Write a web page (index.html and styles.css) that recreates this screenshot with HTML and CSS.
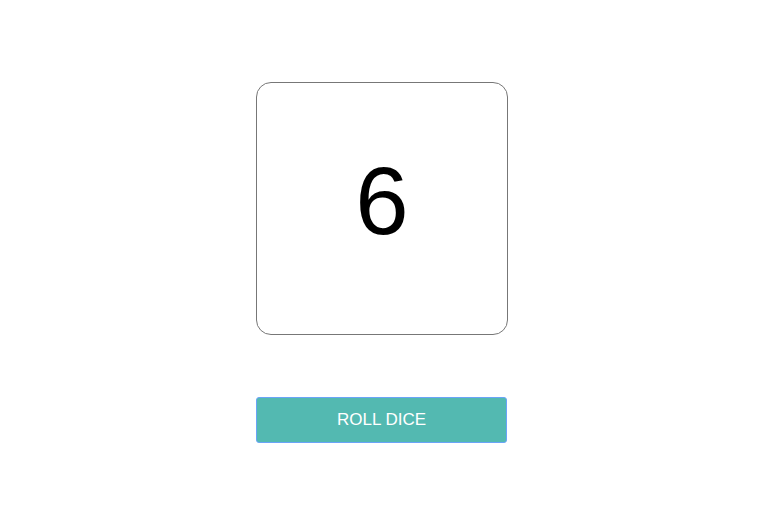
FILE: index.html
```html
<!DOCTYPE html>
<html>
<head>
<meta charset="utf-8">
<link rel="stylesheet" href="styles.css">
</head>
<body>
<div class="app">
  <div class="die"><span class="face">6</span></div>
  <button class="roll">ROLL DICE</button>
</div>
</body>
</html>
```
FILE: styles.css
```css
html, body { margin: 0; padding: 0; background: #fff; }
body { font-family: "Liberation Sans", Arial, sans-serif; }
.app {
  display: flex;
  flex-direction: column;
  align-items: flex-start;
  padding: 82px 0 0 256px;
  gap: 62px;
}
.die {
  box-sizing: border-box;
  width: 252px;
  height: 253px;
  border: 1px solid #777;
  border-radius: 15px;
  display: flex;
  align-items: center;
  justify-content: center;
}
.face {
  font-size: 96px;
  color: #000;
  line-height: 1;
  position: relative;
  top: -8px;
}
.roll {
  box-sizing: border-box;
  width: 251px;
  height: 46px;
  background: #53b9b1;
  color: #fff;
  border: 1px solid #6aa4f8;
  border-radius: 3px;
  font-family: "Liberation Sans", Arial, sans-serif;
  font-size: 17px;
  padding: 0;
  margin: 0;
}
```
